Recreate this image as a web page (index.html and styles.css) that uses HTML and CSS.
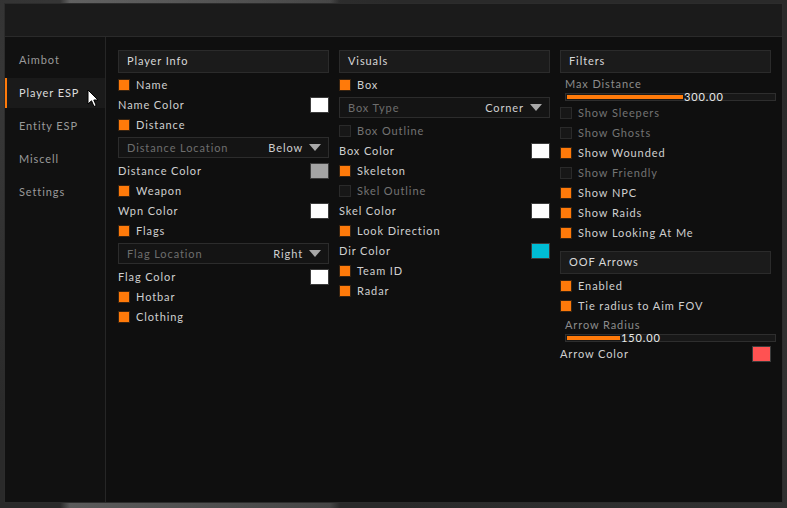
FILE: index.html
```html
<!DOCTYPE html>
<html lang="en">
<head>
    <meta charset="UTF-8">
    <meta name="viewport" content="width=device-width, initial-scale=1.0">
    <title>Player ESP</title>
    <link rel="stylesheet" href="styles.css">
</head>
<body>
    <div class="window">
        <div class="titlebar"></div>

        <div class="main">
            <!-- Tabs -->
            <nav class="sidebar">
                <div class="tab">Aimbot</div>
                <div class="tab active">Player ESP</div>
                <div class="tab">Entity ESP</div>
                <div class="tab">Miscell</div>
                <div class="tab">Settings</div>
            </nav>

            <div class="content">
                <!-- Player Info -->
                <section class="column">
                    <div class="group-title">Player Info</div>
                    <div class="row"><span class="check on"></span>Name</div>
                    <div class="row spread">Name Color<span class="swatch white"></span></div>
                    <div class="row"><span class="check on"></span>Distance</div>
                    <div class="combo"><span class="combo-label">Distance Location</span><span class="combo-value">Below</span><span class="caret"></span></div>
                    <div class="row spread">Distance Color<span class="swatch grey"></span></div>
                    <div class="row"><span class="check on"></span>Weapon</div>
                    <div class="row spread">Wpn Color<span class="swatch white"></span></div>
                    <div class="row"><span class="check on"></span>Flags</div>
                    <div class="combo"><span class="combo-label">Flag Location</span><span class="combo-value">Right</span><span class="caret"></span></div>
                    <div class="row spread">Flag Color<span class="swatch white"></span></div>
                    <div class="row"><span class="check on"></span>Hotbar</div>
                    <div class="row"><span class="check on"></span>Clothing</div>
                </section>

                <!-- Visuals -->
                <section class="column">
                    <div class="group-title">Visuals</div>
                    <div class="row"><span class="check on"></span>Box</div>
                    <div class="combo"><span class="combo-label">Box Type</span><span class="combo-value">Corner</span><span class="caret"></span></div>
                    <div class="row disabled"><span class="check"></span>Box Outline</div>
                    <div class="row spread">Box Color<span class="swatch white"></span></div>
                    <div class="row"><span class="check on"></span>Skeleton</div>
                    <div class="row disabled"><span class="check"></span>Skel Outline</div>
                    <div class="row spread">Skel Color<span class="swatch white"></span></div>
                    <div class="row"><span class="check on"></span>Look Direction</div>
                    <div class="row spread">Dir Color<span class="swatch cyan"></span></div>
                    <div class="row"><span class="check on"></span>Team ID</div>
                    <div class="row"><span class="check on"></span>Radar</div>
                </section>

                <!-- Filters / OOF Arrows -->
                <section class="column">
                    <div class="group-title">Filters</div>
                    <div class="slider-label">Max Distance</div>
                    <div class="slider"><span class="slider-fill" style="width: 116px"></span><span class="slider-value">300.00</span></div>
                    <div class="row disabled"><span class="check"></span>Show Sleepers</div>
                    <div class="row disabled"><span class="check"></span>Show Ghosts</div>
                    <div class="row"><span class="check on"></span>Show Wounded</div>
                    <div class="row disabled"><span class="check"></span>Show Friendly</div>
                    <div class="row"><span class="check on"></span>Show NPC</div>
                    <div class="row"><span class="check on"></span>Show Raids</div>
                    <div class="row"><span class="check on"></span>Show Looking At Me</div>

                    <div class="group-title spaced">OOF Arrows</div>
                    <div class="row"><span class="check on"></span>Enabled</div>
                    <div class="row"><span class="check on"></span>Tie radius to Aim FOV</div>
                    <div class="slider-label">Arrow Radius</div>
                    <div class="slider"><span class="slider-fill" style="width: 53px"></span><span class="slider-value">150.00</span></div>
                    <div class="row spread">Arrow Color<span class="swatch red"></span></div>
                </section>
            </div>
        </div>
    </div>

    <!-- Mouse pointer -->
    <svg class="cursor" width="13" height="19" viewBox="0 0 13 19">
        <path d="M1 1 L1 15 L4.5 11.8 L7 17.5 L9.2 16.5 L6.8 11 L11 11 Z" fill="#fff" stroke="#000" stroke-width="1"/>
    </svg>
</body>
</html>
```

FILE: styles.css
```css
/* General */
body {
    margin: 0;
    width: 787px;
    height: 508px;
    overflow: hidden;
    background-color: #2a2a2a;
    background-image:
        linear-gradient(90deg, transparent 60px, rgba(150,150,150,0.45) 70px, rgba(120,120,120,0.35) 330px, transparent 340px),
        radial-gradient(circle at 10% 20%, #3a3a3a, transparent 40%),
        radial-gradient(circle at 90% 80%, #333, transparent 40%);
    font-family: Lato, "Open Sans", sans-serif;
    font-size: 11px;
    letter-spacing: 0.9px;
    color: #cfcfcf;
    position: relative;
}

/* Window */
.window {
    margin: 3px 0 0 4px;
    width: 779px;
    height: 500px;
    box-sizing: border-box;
    border: 1px solid #2c2c2c;
    background-color: #0f0f0f;
    display: flex;
    flex-direction: column;
}

.titlebar {
    height: 32px;
    flex-shrink: 0;
    background-color: #1b1b1b;
    border-bottom: 1px solid #2a2a2a;
}

.main {
    flex: 1;
    display: flex;
}

/* Tabs */
.sidebar {
    width: 100px;
    flex-shrink: 0;
    border-right: 1px solid #262626;
    background-color: #111;
    padding-top: 8px;
    display: flex;
    flex-direction: column;
    gap: 3px;
}

.tab {
    height: 30px;
    line-height: 29px;
    padding-left: 14px;
    color: #9a9a9a;
}

.tab.active {
    background-color: #1a1a1a;
    color: #dcdcdc;
    box-shadow: inset 2px 0 0 #ff7a0a;
}

/* Columns */
.content {
    flex: 1;
    display: flex;
    gap: 10px;
    padding: 13px 12px 0 12px;
}

.column {
    width: 211px;
    display: flex;
    flex-direction: column;
}

.group-title {
    height: 23px;
    box-sizing: border-box;
    line-height: 20px;
    padding-left: 8px;
    background-color: #1b1b1b;
    border: 1px solid #2b2b2b;
    color: #d8d8d8;
    margin-bottom: 2px;
}

.group-title.spaced {
    margin-top: 8px;
}

/* Rows */
.row {
    height: 20px;
    box-sizing: border-box;
    padding-bottom: 1px;
    display: flex;
    align-items: center;
}

.row.spread {
    justify-content: space-between;
}

.row.disabled {
    color: #737373;
}

.check {
    width: 12px;
    height: 12px;
    box-sizing: border-box;
    margin: 1px 6px 0 0;
    background-color: #171717;
    border: 1px solid #2a2a2a;
}

.check.on {
    background-color: #ff7a0a;
    border-color: #3a2410;
}

.swatch {
    width: 19px;
    height: 16px;
    box-sizing: border-box;
    margin-top: 1px;
    border: 1px solid #3c3c3c;
}

.swatch.white { background-color: #fff; }
.swatch.grey  { background-color: #a4a4a4; }
.swatch.cyan  { background-color: #00bcd4; }
.swatch.red   { background-color: #ff5252; }

/* Combo */
.combo {
    height: 21px;
    box-sizing: border-box;
    margin: 2px 0 3px 0;
    padding: 0 7px 1px 8px;
    display: flex;
    align-items: center;
    background-color: #141414;
    border: 1px solid #2c2c2c;
}

.combo-label {
    flex: 1;
    color: #6e6e6e;
}

.combo-value {
    color: #cfcfcf;
}

.caret {
    margin: 1px 0 0 6px;
    width: 0;
    height: 0;
    border-left: 6px solid transparent;
    border-right: 6px solid transparent;
    border-top: 7px solid #a8a8a8;
}

/* Slider */
.slider-label {
    height: 17px;
    line-height: 17px;
    padding-left: 5px;
    color: #8c8c8c;
}

.slider {
    width: 211px;
    height: 8px;
    box-sizing: border-box;
    margin: 1px 0 2px 5px;
    padding: 1px;
    display: flex;
    align-items: center;
    background-color: #181818;
    border: 1px solid #2e2e2e;
}

.slider-fill {
    height: 100%;
    background-color: #ff7a0a;
}

.slider-value {
    color: #eaeaea;
    line-height: 8px;
    margin-left: 1px;
}

/* Pointer */
.cursor {
    position: absolute;
    left: 87px;
    top: 89px;
}
```
